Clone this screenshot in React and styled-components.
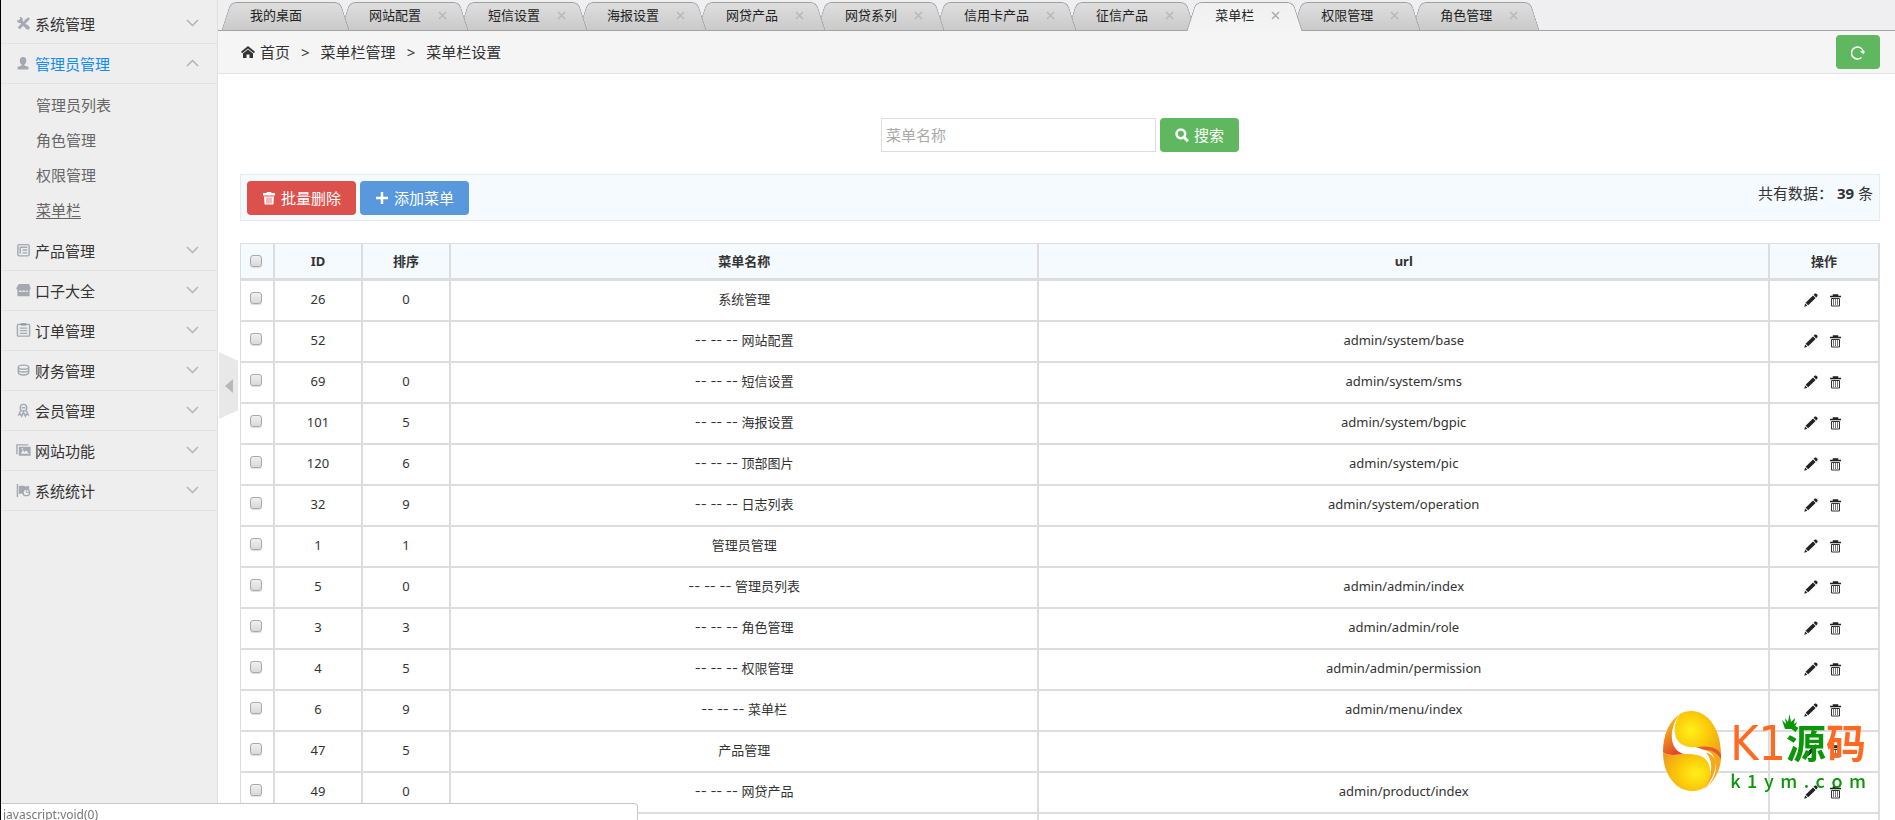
import React from "react";
import styled, { createGlobalStyle, css } from "styled-components";

const GlobalStyle = createGlobalStyle`
  *, *::before, *::after { box-sizing: border-box; }
  body {
    margin: 0;
    overflow: hidden;
    background: #fff;
    color: #333;
    font: 13px/20px "Noto Sans", "Noto Sans CJK SC", sans-serif;
  }
  button, input { font: inherit; color: inherit; }
  a { color: inherit; text-decoration: none; }
  ul { list-style: none; margin: 0; padding: 0; }
`;

const Shell = styled.div`
  display: flex;
  height: 100vh;
  border-left: 1px solid #000;
`;

/* Sidebar */
const Sidebar = styled.nav`
  flex: 0 0 217px;
  padding-top: 4px;
  background: #eee;
  border-right: 1px solid #dfdfdf;
  font-size: 15px;
`;

const GroupButton = styled.button`
  display: flex;
  align-items: center;
  gap: 4px;
  width: 100%;
  height: 40px;
  padding: 0 18px 0 15px;
  border: 0;
  border-bottom: 1px solid #e2e2e2;
  background: none;
  text-align: left;
  cursor: pointer;
  color: ${(p) => (p.$open ? "#148cf1" : "#333")};
`;

const GroupLabel = styled.span`
  flex: 1;
`;

const GroupIcon = styled.svg`
  width: 15px;
  height: 15px;
  color: #a3a8b1;
`;

const Chevron = styled.svg`
  width: 13px;
  height: 8px;
  margin-bottom: 1px;
  fill: none;
  stroke: #b3b3b3;
  stroke-width: 1.5;
`;

const SubMenu = styled.ul`
  padding: 4px 0 3px 35px;
`;

const SubLink = styled.a`
  display: block;
  line-height: 35px;
  color: #666;
  text-decoration: ${(p) => (p.$current ? "underline" : "none")};
  text-underline-offset: 2px;
`;

/* Main column */
const Main = styled.main`
  position: relative;
  flex: 1;
  min-width: 0;
  overflow: hidden;
`;

const Collapse = styled.button`
  position: absolute;
  left: 1px;
  top: 352px;
  display: flex;
  align-items: center;
  justify-content: center;
  width: 19px;
  height: 67px;
  padding: 0;
  border: 0;
  background: #e8e8e8;
  clip-path: polygon(0 0, 100% 13%, 100% 87%, 0 100%);
`;

const CollapseArrow = styled.span`
  border: solid transparent;
  border-width: 7px 8px 7px 0;
  border-right-color: #b8b8b8;
`;

const TabStrip = styled.ul`
  display: flex;
  align-items: flex-end;
  height: 31px;
  padding-left: 8px;
  background: #efeff1;
  border-bottom: 1px solid #a3a3a3;
  isolation: isolate;
`;

const tabSide = css`
  content: "";
  position: absolute;
  z-index: -1;
  top: 0;
  bottom: 0;
  border-top: 1px solid #9f9f9f;
  background: ${(p) =>
    p.$active
      ? "linear-gradient(#f0f0f0, #f4f4f4)"
      : "linear-gradient(#dedede, #cacaca)"};
`;

const Tab = styled.li`
  position: relative;
  z-index: ${(p) => p.$level};
  display: flex;
  align-items: center;
  flex: none;
  gap: 17px;
  height: ${(p) => (p.$active ? 29 : 28)}px;
  margin-bottom: ${(p) => (p.$active ? "-1px" : 0)};
  padding: 0 17px ${(p) => (p.$active ? 3 : 2)}px 24px;
  color: #222;

  &::before {
    ${tabSide}
    left: 0;
    right: 50%;
    border-left: 1px solid #9f9f9f;
    border-top-left-radius: 6px;
    transform: skewX(-18deg);
  }
  &::after {
    ${tabSide}
    left: 40%;
    right: 0;
    border-right: 1px solid #9f9f9f;
    border-top-right-radius: 6px;
    transform: skewX(18deg);
  }
`;

const TabClose = styled.button`
  display: flex;
  width: 9px;
  height: 9px;
  padding: 0;
  border: 0;
  background: none;
  visibility: ${(p) => (p.$hidden ? "hidden" : "visible")};
  color: ${(p) => (p.$active ? "#acacac" : "#b8b8b8")};
`;

const CrumbBar = styled.header`
  display: flex;
  align-items: center;
  justify-content: space-between;
  height: 43px;
  padding: 0 15px 0 23px;
  background: #f5f5f5;
  border-bottom: 1px solid #e3e3e3;
`;

const Crumbs = styled.nav`
  display: flex;
  align-items: center;
  gap: 11px;
  font-size: 15px;
`;

const Crumb = styled.a`
  display: flex;
  align-items: center;
  gap: 5px;
`;

const tones = { green: "#5fb860", red: "#dd514c", blue: "#5a98de" };

const Button = styled.button`
  display: inline-flex;
  align-items: center;
  justify-content: center;
  gap: 5px;
  height: 34px;
  padding: 0 15px;
  border: 0;
  border-radius: 4px;
  background: ${(p) => tones[p.$tone]};
  color: #fff;
  font-size: 15px;
  cursor: pointer;
`;

const ButtonIcon = styled.svg`
  flex: none;
  width: 14px;
  height: 16px;
`;

const Content = styled.section`
  padding: 44px 15px 0 22px;
`;

const SearchForm = styled.form`
  display: flex;
  justify-content: center;
  gap: 4px;
  margin-bottom: 22px;
`;

const SearchInput = styled.input`
  width: 275px;
  height: 34px;
  padding: 0 4px;
  border: 1px solid #ddd;
  background: #fff;
  font-size: 15px;
  &::placeholder { color: #aaa; opacity: 1; }
`;

const Toolbar = styled.div`
  display: flex;
  gap: 4px;
  padding: 6px 6px 5px;
  margin-bottom: 22px;
  background: #f5fafe;
  border: 1px solid #e5ecef;
`;

const Total = styled.p`
  margin: 2px 0 0 auto;
  font-size: 15px;
`;

const MenuTable = styled.table`
  width: 100%;
  table-layout: fixed;
  border-collapse: separate;
  border-spacing: 0;
  border: solid #ddd;
  border-width: 1px 0 0 1px;
  text-align: center;
`;

const Col = styled.col`
  width: ${(p) => p.$width};
`;

const HeadCell = styled.th`
  height: 37px;
  padding: 0;
  background: #f5fafe;
  border: solid #ddd;
  border-width: 0 2px 3px 0;
`;

const Cell = styled.td`
  height: 41px;
  padding: 8px 0 0;
  vertical-align: top;
  border: solid #ddd;
  border-width: 0 2px 2px 0;
`;

const NameCell = styled(Cell)`
  font-family: Inter, "Noto Sans CJK SC", sans-serif;
`;

const Check = styled.input`
  appearance: none;
  display: block;
  width: 12px;
  height: 12px;
  margin: 3px 0 3px 9px;
  border: 1px solid #a9a9a9;
  border-radius: 3px;
  background: linear-gradient(#efefef, #d9d9d9);
  box-shadow: 0 1px 1px #ddd;
`;

const Actions = styled.div`
  display: flex;
  align-items: center;
  justify-content: center;
  gap: 12px;
  padding: 4px 2px 0 0;
`;

const IconLink = styled.a`
  display: flex;
`;

/* Overlays */
const StatusBar = styled.output`
  position: fixed;
  left: 1px;
  bottom: 0;
  width: 637px;
  height: 17px;
  padding: 3px 2px 0;
  background: #fff;
  border: solid #c8c8c8;
  border-width: 1px 1px 0 0;
  border-top-right-radius: 4px;
  font-size: 12px;
  line-height: 16px;
  color: #777;
`;

const Watermark = styled.div`
  position: fixed;
  right: 29px;
  bottom: 28px;
  display: flex;
  align-items: center;
  gap: 8px;
  pointer-events: none;
`;

const Egg = styled.svg`
  width: 60px;
  height: 82px;
`;

const Brand = styled.div`
  display: grid;
  gap: 2px;
  color: #ff6a20;
`;

const BrandName = styled.div`
  display: flex;
  align-items: flex-end;
  height: 56px;
  font: 700 40px/54px "Noto Sans CJK SC", sans-serif;
`;

const BrandLatin = styled.span`
  font: 400 48px/50px "DejaVu Sans Condensed", "DejaVu Sans", sans-serif;
`;

const BrandGreen = styled.span`
  position: relative;
  color: #0a9608;
`;

const Crown = styled.svg`
  position: absolute;
  left: -4px;
  top: 0;
  width: 15px;
  height: 16px;
`;

const BrandUrl = styled.span`
  display: flex;
  justify-content: space-between;
  font: 500 18px/20px "Noto Sans CJK SC", sans-serif;
  color: #0a9608;
`;

const strokeProps = { fill: "none", stroke: "currentColor", strokeWidth: 1.5 };

const groupIcons = {
  tools: (
    <>
      <path d="M4.500 5 13 13.500" stroke="currentColor" strokeWidth="3.200" />
      <path d="M12 4 3 13" stroke="currentColor" strokeWidth="3" />
      <path
        d="M1 4.500 3 4.500 4.500 3 4 1C6.500 1 8 3 7 5.500L5 7.500C2.500 7.500 1 6.500 1 4.500ZM9.500 4.500 13 1.200 15 3 11.500 6.500ZM9.500 11 12 9 15 12.500 13 14.800Z"
        fill="currentColor"
      />
    </>
  ),
  user: (
    <path
      d="M7.500 1C5 1 4 2.500 4 5c0 2 1 3.500 2 4v1L2 11.500C1.500 12 1.500 14 2 14.500h11c.5-.5.5-2.500 0-3L9 10V9c1-.5 2-2 2-4 0-2.500-1-4-3.500-4Z"
      fill="currentColor"
    />
  ),
  list: (
    <g {...strokeProps}>
      <rect x="2" y="1.700" width="12" height="12" rx="1.500" />
      <path d="M4.500 4.500h7.500M7 7.500h5M7 10.500h5M4.500 4v7.500" />
    </g>
  ),
  shop: (
    <path
      d="M3 1h11l1.500 4v2H14.500v7h-13V7H.5V5ZM3.500 8v1.500H6V8h1v1.500h2.500V8h1v1.500h2V8"
      fill="currentColor"
      fillRule="evenodd"
    />
  ),
  order: (
    <g {...strokeProps}>
      <rect x="1.500" y="1.500" width="13" height="12.500" rx="1" />
      <path d="M4 5.500h8M4 8.200h8M4 11h8" strokeWidth="1.300" />
      <path d="M5 1.500h6" strokeWidth="2.500" stroke="#8f98ab" />
    </g>
  ),
  coins: (
    <g {...strokeProps}>
      <ellipse cx="8" cy="4.500" rx="5.500" ry="2.200" />
      <path d="M2.500 4.500v6c0 3 11 3 11 0v-6M2.500 7.500c0 2.800 11 2.800 11 0" />
    </g>
  ),
  medal: (
    <g {...strokeProps}>
      <circle cx="8" cy="5" r="3.500" />
      <path d="M5 8 3 12.500l2-.5 1 2L8 10l2 4 1-2 2 .5L11 8M6 5h4" />
    </g>
  ),
  images: (
    <>
      <path d="M1 12V2h12" fill="none" stroke="currentColor" strokeWidth="1.500" />
      <path d="M3 4h12.500v9.500H3ZM5 11.500h9L11 8 9 9.500 7.500 7.500ZM6 5.500v1.500h1.500V5.500Z" fill="currentColor" fillRule="evenodd" />
    </>
  ),
  stats: (
    <>
      <path d="M1.500 1v14" stroke="currentColor" strokeWidth="1.500" />
      <path d="M3 3h5c2 1 4 1 6 0v4a4 4 0 0 0-6 5c-2-1-3-1-5 0Z" fill="currentColor" />
      <circle cx="11" cy="10" r="3.500" {...strokeProps} />
      <path d="M11 10h3M11 10V7" stroke="currentColor" />
    </>
  ),
};

const groups = [
  { icon: "tools", label: "系统管理" },
  {
    icon: "user",
    label: "管理员管理",
    items: ["管理员列表", "角色管理", "权限管理", "菜单栏"],
  },
  { icon: "list", label: "产品管理" },
  { icon: "shop", label: "口子大全" },
  { icon: "order", label: "订单管理" },
  { icon: "coins", label: "财务管理" },
  { icon: "medal", label: "会员管理" },
  { icon: "images", label: "网站功能" },
  { icon: "stats", label: "系统统计" },
];

const tabs = [
  "我的桌面", "网站配置", "短信设置", "海报设置", "网贷产品", "网贷系列",
  "信用卡产品", "征信产品", "菜单栏", "权限管理", "角色管理",
];

const rows = [
  ["26", "0", "系统管理", ""],
  ["52", "", "-- -- -- 网站配置", "admin/system/base"],
  ["69", "0", "-- -- -- 短信设置", "admin/system/sms"],
  ["101", "5", "-- -- -- 海报设置", "admin/system/bgpic"],
  ["120", "6", "-- -- -- 顶部图片", "admin/system/pic"],
  ["32", "9", "-- -- -- 日志列表", "admin/system/operation"],
  ["1", "1", "管理员管理", ""],
  ["5", "0", "-- -- -- 管理员列表", "admin/admin/index"],
  ["3", "3", "-- -- -- 角色管理", "admin/admin/role"],
  ["4", "5", "-- -- -- 权限管理", "admin/admin/permission"],
  ["6", "9", "-- -- -- 菜单栏", "admin/menu/index"],
  ["47", "5", "产品管理", ""],
  ["49", "0", "-- -- -- 网贷产品", "admin/product/index"],
  ["", "", "", ""],
];

const columns = ["34px", "88px", "88px", "35.9%", "auto", "110px"];

function PencilIcon() {
  return (
    <svg width="14" height="14" viewBox="0 0 14 14" fill="#222">
      <path d="M10.600.8c.6-.6 1.200-.5 1.800 0l.8.8c.6.6.6 1.200 0 1.800l-1 1L9.600 1.800ZM9 2.400 11.600 5 4.200 12.200 1.600 9.700ZM1.100 10.500l2.300 2.300L.3 13.700Z" />
    </svg>
  );
}

function TrashIcon() {
  return (
    <svg width="12" height="13" viewBox="0 0 12 13" fill="none">
      <path d="M0 2.500h11M3.500 2V1h4v1" stroke="#222" strokeWidth="1.500" />
      <path d="M1.500 4.500h8v7.500h-8Z" stroke="#333" />
      <path d="M3.500 5v6M5.500 5v6M7.500 5v6" stroke="#777" />
    </svg>
  );
}

function MenuGroup({ icon, label, items }) {
  return (
    <>
      <GroupButton type="button" $open={!!items} aria-expanded={!!items}>
        <GroupIcon viewBox="0 0 16 16" aria-hidden="true">{groupIcons[icon]}</GroupIcon>
        <GroupLabel>{label}</GroupLabel>
        <Chevron viewBox="0 0 13 8" aria-hidden="true">
          <path d={items ? "M1 7 6.500 1.500 12 7" : "M1 1 6.500 6.500 12 1"} />
        </Chevron>
      </GroupButton>
      {items && (
        <SubMenu>
          {items.map((item) => (
            <li key={item}>
              <SubLink href="#" $current={item === "菜单栏"}>{item}</SubLink>
            </li>
          ))}
        </SubMenu>
      )}
    </>
  );
}

function Logo() {
  return (
    <Watermark>
      <Egg viewBox="0 0 60 82" aria-hidden="true">
        <defs>
          <radialGradient id="eggTop" cx="0.350" cy="0.450" r="0.800">
            <stop offset="0" stopColor="#fff01a" />
            <stop offset="0.500" stopColor="#fbc808" />
            <stop offset="1" stopColor="#f09a1c" />
          </radialGradient>
          <radialGradient id="eggBottom" cx="0.700" cy="0.550" r="0.800">
            <stop offset="0" stopColor="#fff01a" />
            <stop offset="0.500" stopColor="#fbc808" />
            <stop offset="1" stopColor="#f09a1c" />
          </radialGradient>
          <linearGradient id="eggFold" x1="0" y1="0" x2="0.400" y2="1">
            <stop offset="0.300" stopColor="#f6b01a" />
            <stop offset="1" stopColor="#e2492a" />
          </linearGradient>
        </defs>
        <path d="M18 4C26-1 38 0 46 8c9 9 13 22 13 37-4-7-14-9-25-8-12 1-20-4-21-14C12 15 14 9 18 4Z" fill="url(#eggTop)" />
        <path d="M1 42c4 4 12 3 22 2 15-1 24 4 25 15 1 7-1 14-6 19-8 5-21 4-29-4C5 66 1 55 1 42Z" fill="url(#eggBottom)" />
        <path d="M18 4C7 11 1 25 1 42c4 4 13 3 22 2C11 38 6 20 18 4Z" fill="url(#eggFold)" />
        <path d="M42 79C54 71 60 57 59 43c-3-6-13-7-25-6 17 4 20 24 8 42Z" fill="#f5a81a" />
        <path d="M34 37c13-2 24 1 25 8v4c-4-6-9-9-15-9Z" fill="#e35a2c" />
        <path d="M18 4C8 19 11 37 24 40c8 1 17-3 25 3 8 8 5 23-6 35 11-8 13-22 9-30-6-9-18-4-29-4C8 42 5 20 18 4Z" fill="#fff" />
      </Egg>
      <Brand>
        <BrandName>
          <BrandLatin>K1</BrandLatin>
          <BrandGreen>
            源
            <Crown viewBox="0 0 15 16" aria-hidden="true">
              <path d="M3 15 0 6l4 4L3 4l3 4 1.500-8L9 8l4-4-1 6 3-2-3 7Z" fill="#0a9608" />
            </Crown>
          </BrandGreen>
          <span>码</span>
        </BrandName>
        <BrandUrl>
          {[..."k1ym.com"].map((letter, i) => (
            <span key={i}>{letter}</span>
          ))}
        </BrandUrl>
      </Brand>
    </Watermark>
  );
}

export default function App() {
  return (
    <>
      <GlobalStyle />
      <Shell>
        <Sidebar>
          {groups.map((group) => (
            <MenuGroup key={group.label} {...group} />
          ))}
        </Sidebar>
        <Main>
          <TabStrip>
            {tabs.map((label, i) => {
              const active = label === "菜单栏";
              return (
                <Tab key={label} $active={active} $level={active ? 20 : tabs.length - i}>
                  <span>{label}</span>
                  <TabClose type="button" aria-label="关闭" $active={active} $hidden={i === 0}>
                    <svg width="9" height="9" viewBox="0 0 9 9" stroke="currentColor" strokeWidth="1.500">
                      <path d="M1 1 8 8M8 1 1 8" />
                    </svg>
                  </TabClose>
                </Tab>
              );
            })}
          </TabStrip>
          <CrumbBar>
            <Crumbs>
              <Crumb href="#">
                <svg width="14" height="12" viewBox="0 0 14 12" fill="#333" aria-hidden="true">
                  <path d="M7 0 14 5.800 12.900 7.200 7 2.400 1.100 7.200 0 5.800ZM7 3.600l5 4V12H8.500V8.500h-3V12H2V7.600Z" />
                </svg>
                首页
              </Crumb>
              <span>&gt;</span>
              <span>菜单栏管理</span>
              <span>&gt;</span>
              <span>菜单栏设置</span>
            </Crumbs>
            <Button type="button" $tone="green" aria-label="刷新">
              <ButtonIcon viewBox="0 0 14 16" fill="none" stroke="#fff" strokeWidth="1.500" aria-hidden="true">
                <path d="M10.500 13.500A6 6 0 1 1 12.300 7.500" />
                <path d="M9.500 7.500h4L12.700 10Z" fill="#fff" strokeWidth="0.500" />
              </ButtonIcon>
            </Button>
          </CrumbBar>
          <Content>
            <SearchForm>
              <SearchInput type="text" placeholder="菜单名称" aria-label="菜单名称" />
              <Button type="button" $tone="green">
                <ButtonIcon viewBox="0 0 12 14" fill="none" stroke="#fff" aria-hidden="true">
                  <circle cx="5" cy="6" r="3.800" strokeWidth="2.200" />
                  <path d="M7.800 9 11.300 12.500" strokeWidth="2.600" />
                </ButtonIcon>
                搜索
              </Button>
            </SearchForm>
            <Toolbar>
              <Button type="button" $tone="red">
                <ButtonIcon viewBox="0 0 14 16" aria-hidden="true">
                  <path d="M5 2h4l.5 1H13v2.500H1V3h3.500ZM2 6.500h10l-.6 8H2.600Z" fill="#fff" />
                  <path d="M5 7.500v6M7 7.500v6M9 7.500v6" stroke="#dd514c" strokeWidth="0.800" />
                </ButtonIcon>
                批量删除
              </Button>
              <Button type="button" $tone="blue">
                <ButtonIcon viewBox="0 0 14 16" stroke="#fff" strokeWidth="2.400" aria-hidden="true">
                  <path d="M7 2v12M1 8h12" />
                </ButtonIcon>
                添加菜单
              </Button>
              <Total>
                共有数据： <strong>39</strong> 条
              </Total>
            </Toolbar>
            <MenuTable>
              <colgroup>
                {columns.map((width, i) => (
                  <Col key={i} $width={width} />
                ))}
              </colgroup>
              <thead>
                <tr>
                  <HeadCell scope="col"><Check type="checkbox" aria-label="全选" /></HeadCell>
                  {["ID", "排序", "菜单名称", "url", "操作"].map((title) => (
                    <HeadCell key={title} scope="col">{title}</HeadCell>
                  ))}
                </tr>
              </thead>
              <tbody>
                {rows.map(([id, order, name, url]) => (
                  <tr key={id}>
                    <Cell><Check type="checkbox" aria-label={`选择 ${id}`} /></Cell>
                    <Cell>{id}</Cell>
                    <Cell>{order}</Cell>
                    <NameCell>{name}</NameCell>
                    <Cell>{url}</Cell>
                    <Cell>
                      <Actions>
                        <IconLink href="#" aria-label="编辑"><PencilIcon /></IconLink>
                        <IconLink href="#" aria-label="删除"><TrashIcon /></IconLink>
                      </Actions>
                    </Cell>
                  </tr>
                ))}
              </tbody>
            </MenuTable>
          </Content>
          <Collapse type="button" aria-label="收起菜单"><CollapseArrow /></Collapse>
        </Main>
      </Shell>
      <Logo />
      <StatusBar>javascript:void(0)</StatusBar>
    </>
  );
}
